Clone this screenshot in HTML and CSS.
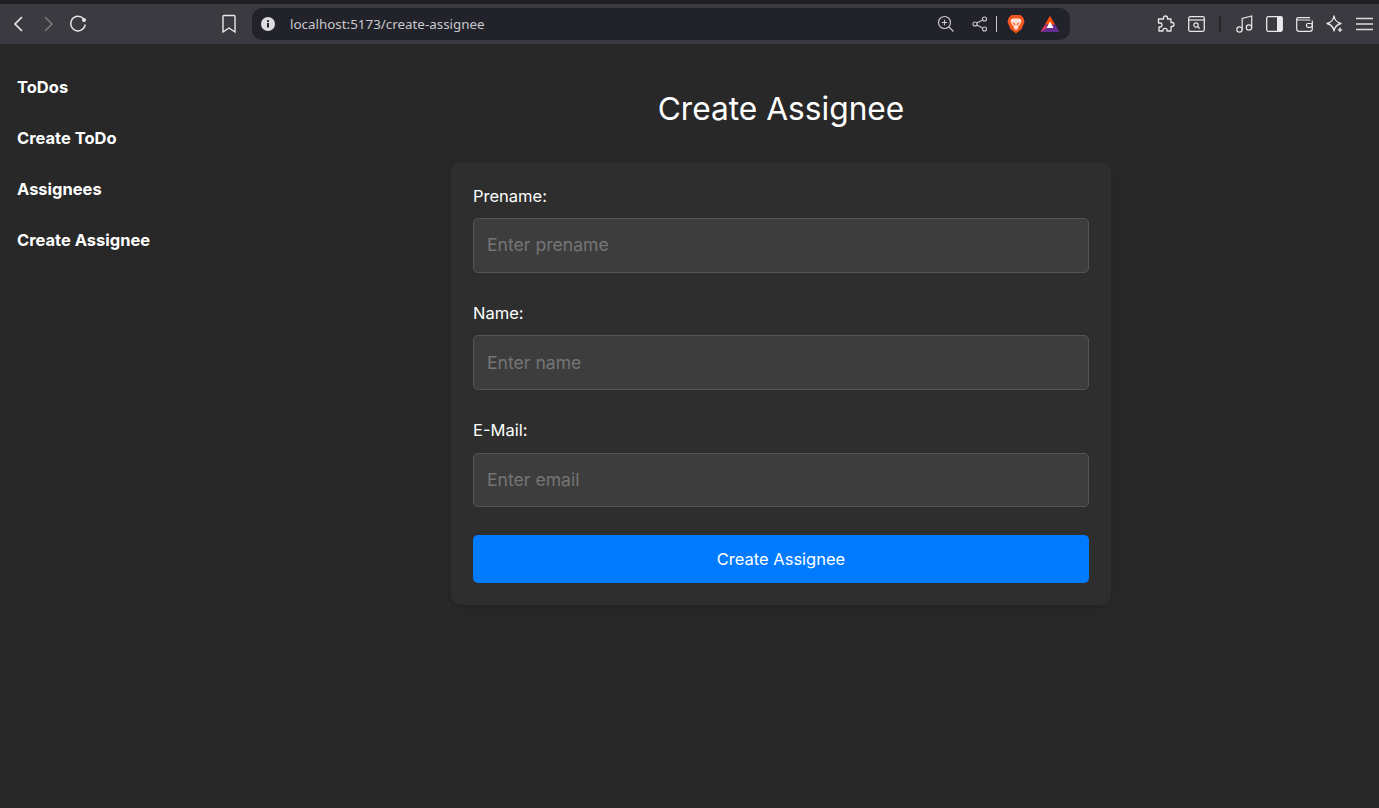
FILE: index.html
```html
<!DOCTYPE html>
<html lang="en">
<head>
    <meta charset="UTF-8">
    <meta name="viewport" content="width=device-width, initial-scale=1.0">
    <title>Create Assignee</title>
    <link rel="stylesheet" href="styles.css">
</head>
<body>

<header class="browser">
    <div class="toolbar">
        <div class="nav-btns">
            <svg class="icon" width="20" height="20" viewBox="0 0 20 20"><path d="M13 3 L6 10 L13 17" stroke="#e8e8ea" stroke-width="1.7" fill="none"/></svg>
            <svg class="icon" width="20" height="20" viewBox="0 0 20 20"><path d="M7 3 L14 10 L7 17" stroke="#77777c" stroke-width="1.7" fill="none"/></svg>
            <svg class="icon reload" width="20" height="20" viewBox="0 0 20 20"><path d="M15.5 4.8 A7.3 7.3 0 1 0 17.2 10.5" stroke="#e8e8ea" stroke-width="1.5" fill="none"/><circle cx="16" cy="6" r="2" fill="#e8e8ea"/></svg>
        </div>
        <svg class="icon bookmark" width="16" height="20" viewBox="0 0 16 20"><path d="M2 2.5 Q2 1.5 3 1.5 H13 Q14 1.5 14 2.5 V18 L8 14 L2 18 Z" stroke="#e8e8ea" stroke-width="1.4" fill="none"/></svg>
        <div class="urlbar">
            <svg class="icon" width="14" height="14" viewBox="0 0 14 14"><circle cx="7" cy="7" r="7" fill="#dcdcdf"/><rect x="6" y="6" width="2" height="4.5" fill="#22222a"/><rect x="6" y="3.2" width="2" height="1.8" fill="#22222a"/></svg>
            <span class="url">localhost:5173/create-assignee</span>
            <div class="url-actions">
                <svg class="icon" width="18" height="18" viewBox="0 0 18 18"><circle cx="7.5" cy="7.5" r="6" stroke="#c9c9cc" stroke-width="1.2" fill="none"/><path d="M12 12 L16.5 16.5 M7.5 4.7 V10.3 M4.7 7.5 H10.3" stroke="#c9c9cc" stroke-width="1.2" fill="none"/></svg>
                <svg class="icon share" width="16" height="16" viewBox="0 0 16 16"><circle cx="3" cy="8" r="2" stroke="#c9c9cc" stroke-width="1.1" fill="none"/><circle cx="12.5" cy="3" r="2" stroke="#c9c9cc" stroke-width="1.1" fill="none"/><circle cx="12.5" cy="13" r="2" stroke="#c9c9cc" stroke-width="1.1" fill="none"/><path d="M4.8 7 L10.7 4 M4.8 9 L10.7 12" stroke="#c9c9cc" stroke-width="1.1"/></svg>
                <span class="url-sep"></span>
                <svg class="icon brave" width="18" height="20" viewBox="0 0 18 20"><path d="M4.5 1 H13.5 L16.5 4 L17.5 8 L14.5 15 L9 19.5 L3.5 15 L0.5 8 L1.5 4 Z" fill="#f1571f"/><path d="M3.5 6 L6 4.5 H12 L14.5 6 L13.5 10 L11.5 12 L11 14.5 L9 16 L7 14.5 L6.5 12 L4.5 10 Z" fill="#ffe3d6"/><path d="M5.5 8 L8 9.5 L8.5 11.5 L7 11 Z M12.5 8 L10 9.5 L9.5 11.5 L11 11 Z" fill="#f1571f"/></svg>
                <svg class="icon bat" width="20" height="18" viewBox="0 0 20 18"><path d="M10 1 L19.5 17 H0.5 Z" fill="#662d91"/><path d="M10 1 L15 9.5 H5 Z" fill="#ff5000"/><path d="M0.5 17 L5 9.5 L7 13 Z" fill="#e0365f"/><path d="M10 6.5 L13.5 13 H6.5 Z" fill="#fff"/></svg>
            </div>
        </div>
        <div class="tools">
            <svg class="icon" width="18" height="18" viewBox="0 0 18 18"><path d="M6.5 3 Q6.5 1 8.5 1 Q10.5 1 10.5 3 V4 H14 V7.5 H15 Q17 7.5 17 9.5 Q17 11.5 15 11.5 H14 V16 H10 V15 Q10 13.3 8 13.3 Q6 13.3 6 15 V16 H2 V12 H3 Q5 12 5 10 Q5 8 3 8 H1.5 V4 H6.5 Z" stroke="#e8e8ea" stroke-width="1.3" fill="none" stroke-linejoin="round"/></svg>
            <svg class="icon search-tab" width="17" height="16" viewBox="0 0 17 16"><rect x="0.7" y="0.7" width="15.6" height="14.6" rx="1.5" stroke="#e8e8ea" stroke-width="1.3" fill="none"/><path d="M1 4 H16" stroke="#e8e8ea" stroke-width="1.2"/><circle cx="8" cy="9" r="2.2" stroke="#e8e8ea" stroke-width="1.2" fill="none"/><path d="M9.7 10.7 L11.7 12.5" stroke="#e8e8ea" stroke-width="1.2"/></svg>
            <span class="tool-sep"></span>
            <svg class="icon music" width="17" height="18" viewBox="0 0 17 18"><circle cx="3.5" cy="14.5" r="2.7" stroke="#e8e8ea" stroke-width="1.2" fill="none"/><circle cx="13" cy="12.5" r="2.7" stroke="#e8e8ea" stroke-width="1.2" fill="none"/><path d="M6.2 14.5 V3.5 L15.7 1 V12.5" stroke="#e8e8ea" stroke-width="1.2" fill="none"/></svg>
            <svg class="icon sidebar-ico" width="17" height="16" viewBox="0 0 17 16"><rect x="0.7" y="0.7" width="15.6" height="14.6" rx="1.5" stroke="#e8e8ea" stroke-width="1.3" fill="none"/><rect x="11" y="1" width="5" height="14" fill="#e8e8ea"/></svg>
            <svg class="icon wallet" width="17" height="15" viewBox="0 0 17 15"><path d="M14.5 3 H2.5 Q0.7 3 0.7 1.8 V12 Q0.7 14.3 3 14.3 H14 Q16.3 14.3 16.3 12 V3.5 M14 0.7 H2.5 Q0.7 0.7 0.7 2" stroke="#e8e8ea" stroke-width="1.2" fill="none"/><rect x="10.5" y="6.5" width="5.8" height="3.8" rx="1.5" stroke="#e8e8ea" stroke-width="1.2" fill="none"/></svg>
            <svg class="icon" width="17" height="18" viewBox="0 0 17 18"><path d="M8 1 Q9 7 15 8.5 Q9 10 8 16 Q7 10 1 8.5 Q7 7 8 1 Z" stroke="#e8e8ea" stroke-width="1.3" fill="none" stroke-linejoin="round"/><path d="M14 12.5 V17 M11.8 14.8 H16.2" stroke="#e8e8ea" stroke-width="1.3"/></svg>
            <svg class="icon menu" width="17" height="14" viewBox="0 0 17 14"><path d="M0 1.5 H17 M0 7 H17 M0 12.5 H17" stroke="#dcdcdf" stroke-width="1.5"/></svg>
        </div>
    </div>
</header>

<div class="app">
    <nav class="sidebar">
        <a href="#">ToDos</a>
        <a href="#">Create ToDo</a>
        <a href="#">Assignees</a>
        <a href="#">Create Assignee</a>
    </nav>

    <main class="content">
        <h1>Create Assignee</h1>
        <form class="card">
            <label for="prename">Prename:</label>
            <input type="text" id="prename" placeholder="Enter prename">

            <label for="name">Name:</label>
            <input type="text" id="name" placeholder="Enter name">

            <label for="email" class="label-email">E-Mail:</label>
            <input type="email" id="email" placeholder="Enter email">

            <button type="submit">Create Assignee</button>
        </form>
    </main>
</div>

</body>
</html>
```

FILE: styles.css
```css
* { box-sizing: border-box; }
html, body { height: 100%; }
body { margin: 0; background: #282828; color: #fff; font-family: Inter, "Liberation Sans", sans-serif; overflow: hidden; }

.browser { height: 44px; padding-top: 4px; background: #1e1e23; }
.toolbar { height: 40px; display: flex; align-items: center; background: #3a3a40; padding: 0 6px 0 9px; }
.icon { display: block; flex: none; }
.nav-btns { display: flex; gap: 9px; width: 80px; }
.reload { margin-left: 1px; }
.bookmark { margin-left: 133px; }
.urlbar { flex: none; width: 818px; height: 32px; margin-left: 15px; padding: 0 9px; display: flex; align-items: center; background: #22222a; border-radius: 10px; }
.url { margin-left: 15px; font: 13.4px "Noto Sans", sans-serif; color: #c9c9cc; }
.url-actions { margin-left: auto; display: flex; align-items: center; }
.share { margin-left: 17px; }
.url-sep { width: 1px; height: 16px; margin: 0 10px 0 8px; background: #c9c9cc; }
.bat { margin-left: 15px; margin-right: 1px; }
.tools { margin-left: 87px; display: flex; align-items: center; gap: 13px; }
.tool-sep { width: 2px; height: 16px; margin: 0 2px 0 1px; background: #25252a; }

.app { display: flex; height: 764px; }
.sidebar { width: 183px; flex: none; padding: 34px 0 0 17px; display: flex; flex-direction: column; gap: 32px; }
.sidebar a { color: #fff; font-size: 16.5px; font-weight: 700; line-height: 19px; text-decoration: none; white-space: nowrap; }

.content { flex: 1; display: flex; flex-direction: column; align-items: center; }
h1 { margin: 45px 0 33px; font-size: 31.7px; font-weight: 400; line-height: 40px; }

.card { width: 660px; height: 443px; padding: 22px; background: #2e2e2e; border-radius: 10px; box-shadow: 0 2px 8px rgba(0, 0, 0, 0.12); display: flex; flex-direction: column; }
label { font-size: 16.5px; line-height: 24px; margin-bottom: 10px; }
.label-email { margin-bottom: 11px; }
input { height: 55px; margin-bottom: 28px; padding: 0 13px; background: #3d3d3d; color: #fff; border: 1px solid #555; border-radius: 5px; font: 17.6px Inter, "Liberation Sans", sans-serif; }
input::placeholder { color: #757575; opacity: 1; }
#prename { padding-bottom: 2px; }
#email { height: 54px; padding-bottom: 2px; }
button { height: 48px; background-color: #007bff; color: #fff; border: none; border-radius: 5px; font: 16.5px Inter, "Liberation Sans", sans-serif; cursor: pointer; }
```
